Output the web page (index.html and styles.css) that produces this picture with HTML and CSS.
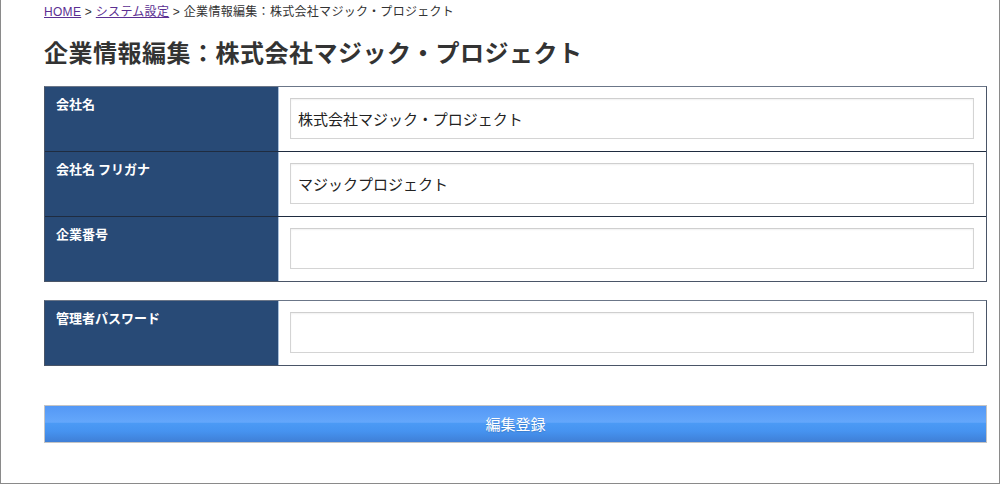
FILE: index.html
```html
<!DOCTYPE html>
<html lang="ja">
<head>
<meta charset="utf-8">
<title>企業情報編集</title>
<link rel="stylesheet" href="styles.css">
</head>
<body>
<div class="frame">
  <div class="breadcrumb">
    <a href="#" class="crumb-link">HOME</a> &gt; <a href="#" class="crumb-link">システム設定</a> &gt; 企業情報編集：株式会社マジック・プロジェクト
  </div>
  <h1 class="page-title">企業情報編集：株式会社マジック・プロジェクト</h1>

  <form class="form">
    <div class="table">
      <div class="row">
        <div class="label">会社名</div>
        <div class="value"><input class="field" type="text" value="株式会社マジック・プロジェクト"></div>
      </div>
      <div class="row">
        <div class="label">会社名 フリガナ</div>
        <div class="value"><input class="field" type="text" value="マジックプロジェクト"></div>
      </div>
      <div class="row">
        <div class="label">企業番号</div>
        <div class="value"><input class="field" type="text" value=""></div>
      </div>
    </div>

    <div class="table table-second">
      <div class="row">
        <div class="label">管理者パスワード</div>
        <div class="value"><input class="field" type="password" value=""></div>
      </div>
    </div>

    <button type="button" class="submit">編集登録</button>
  </form>
</div>
</body>
</html>
```

FILE: styles.css
```css
* { box-sizing: border-box; }

html, body {
  margin: 0;
  padding: 0;
  background: #fff;
}

body {
  font-family: "Liberation Sans", "Noto Sans CJK JP", sans-serif;
  color: #333;
}

.frame {
  width: 1000px;
  height: 484px;
  border-left: 1px solid #8a8a8a;
  border-right: 1px solid #8a8a8a;
  border-bottom: 1px solid #8a8a8a;
  padding: 0 12px 0 43px;
}

.breadcrumb {
  height: 20px;
  padding-top: 4px;
  font-size: 12px;
  line-height: 16px;
  color: #333;
  letter-spacing: 0.3px;
}

.crumb-link {
  color: #5b2f92;
  text-decoration: underline;
}

.page-title {
  margin: 14px 0 0;
  height: 36px;
  font-family: "Noto Sans CJK JP", sans-serif;
  font-size: 24px;
  line-height: 36px;
  font-weight: 700;
  color: #333;
  letter-spacing: 0.5px;
}

.form {
  margin: 16px 0 0;
}

.table {
  border: 1px solid #4a5567;
  border-top-color: #6b7688;
}

.table-second {
  margin-top: 18px;
}

.row {
  display: grid;
  grid-template-columns: 234px 1fr;
  height: 64px;
}

.row + .row {
  height: 65px;
  border-top: 1px solid #1f2c40;
}

.label {
  background: #284a76;
  border-right: 1px solid #a9c0db;
  color: #fff;
  font-family: "Noto Sans CJK JP", sans-serif;
  font-size: 13px;
  line-height: 18px;
  font-weight: 700;
  padding: 8px 11px 0;
}

.value {
  background: #fff;
  padding: 11px 12px 0 11px;
}

.field {
  display: block;
  width: 100%;
  height: 41px;
  border: 1px solid #d4d4d4;
  border-top-color: #cfcfcf;
  box-shadow: inset 0 1px 2px rgba(0, 0, 0, 0.06);
  padding: 0 7px;
  font-family: "Noto Sans CJK JP", sans-serif;
  font-size: 15px;
  color: #222;
  background: #fff;
  outline: none;
}

.submit {
  display: block;
  width: 943px;
  height: 38px;
  margin-top: 39px;
  border: 1px solid #c4c4c4;
  background: linear-gradient(to bottom, #5498f5 0%, #64a7fb 45%, #4b9af5 48%, #4693f0 70%, #3f7fd6 100%);
  color: #fff;
  font-family: "Noto Sans CJK JP", sans-serif;
  font-size: 15px;
  line-height: 36px;
  padding: 0;
  text-shadow: 0 1px 1px rgba(0, 0, 0, 0.15);
  cursor: pointer;
}
```
